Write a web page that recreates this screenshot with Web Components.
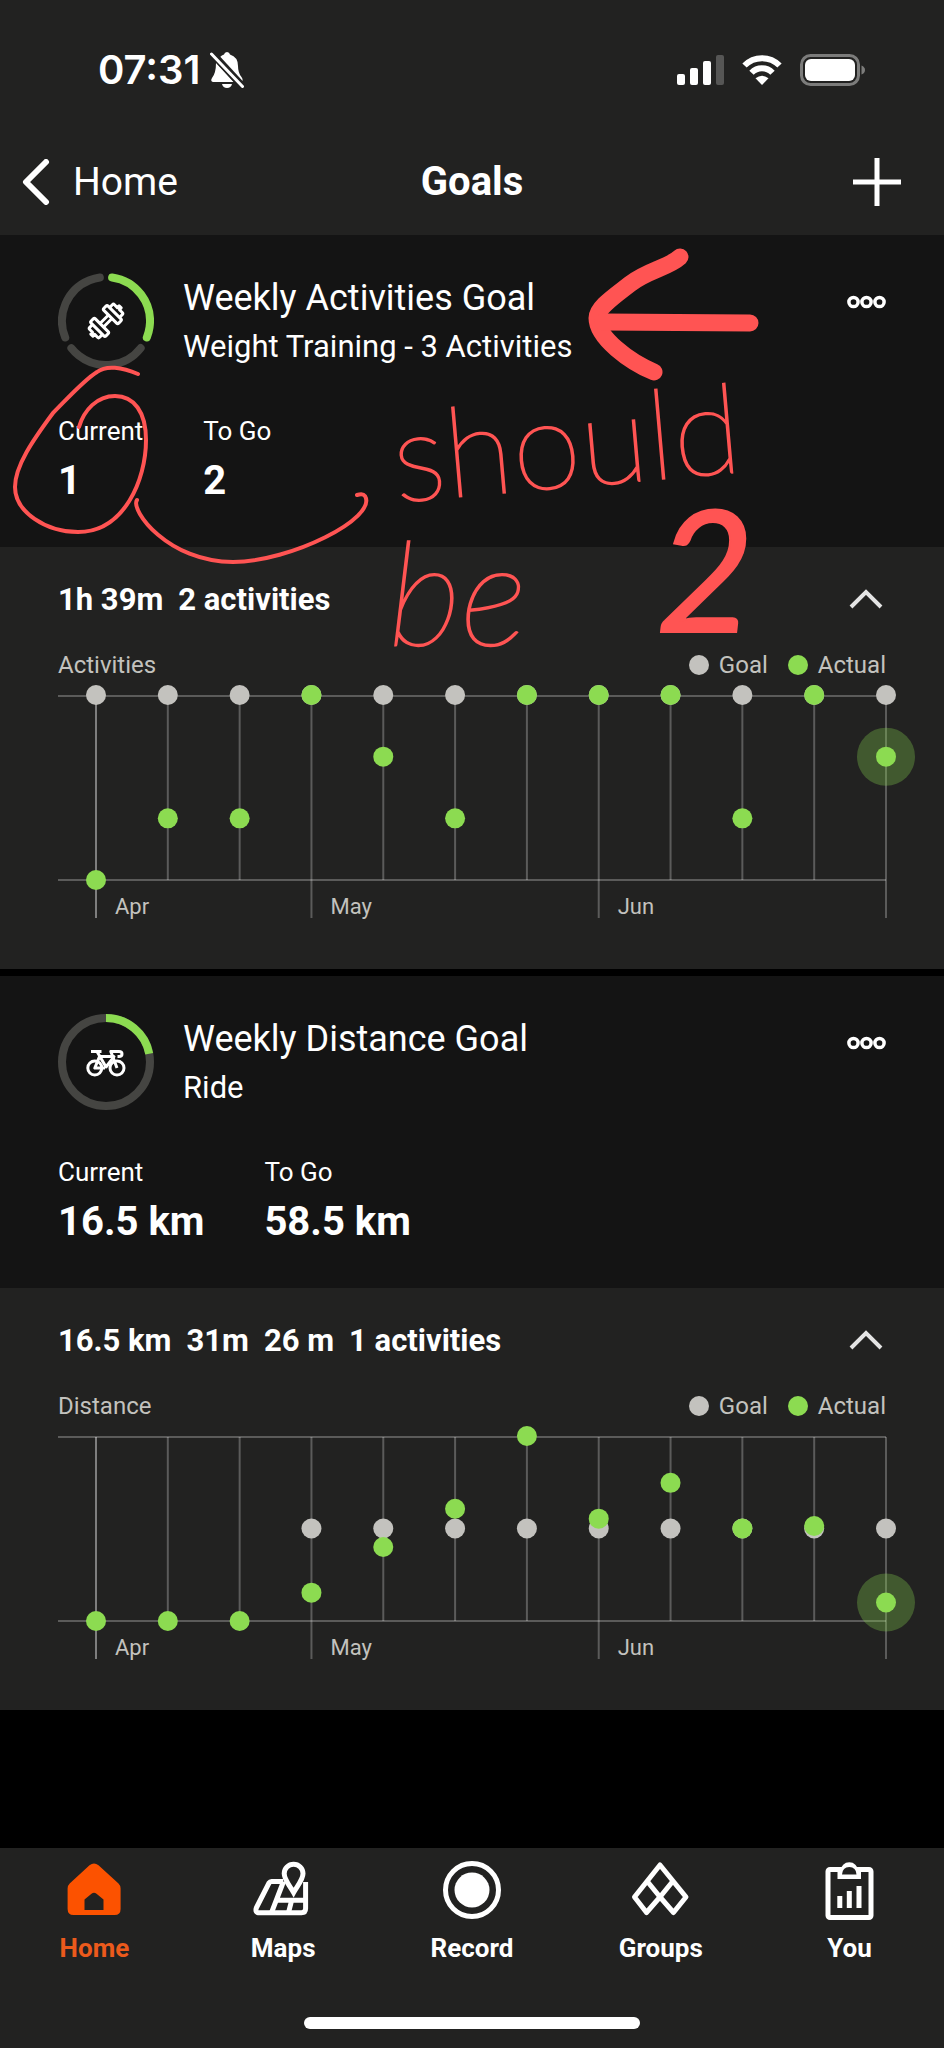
<!DOCTYPE html>
<html lang="en">
<head>
<meta charset="utf-8">
<meta name="viewport" content="width=device-width, initial-scale=1">
<title>Goals</title>
<style>
    html, body {
        margin: 0;
        background: #000;
    }

    body {
        --surface: #222221;
        --card: #141414;
        --green: #8cdb51;
        --grey: #c3c2be;
        --track: #454542;
        --ink: #ff5453;
        position: relative;
        display: flex;
        flex-direction: column;
        min-height: 100vh;
        color: #fff;
        font-family: Roboto, "Liberation Sans", sans-serif;
    }

    main {
        flex: 1;
        display: flex;
        flex-direction: column;
        gap: 7px;
    }
</style>
</head>
<body>
    <status-bar time="07:31"></status-bar>
    <nav-header back="Home">Goals</nav-header>

    <main>
        <goal-card heading="Weekly Activities Goal" subtitle="Weight Training - 3 Activities" current="1" togo="2">
            <goal-ring slot="ring" icon="dumbbell" steps="3" done="1"></goal-ring>
            <span slot="summary">1h 39m</span>
            <span slot="summary">2 activities</span>
            <goal-chart slot="chart" label="Activities" max="3"
                goal="3,3,3,3,3,3,3,3,3,3,3,3"
                actual="0,1,1,3,2,1,3,3,3,1,3,2"></goal-chart>
        </goal-card>

        <goal-card heading="Weekly Distance Goal" subtitle="Ride" current="16.5 km" togo="58.5 km">
            <goal-ring slot="ring" icon="bike" percent="22"></goal-ring>
            <span slot="summary">16.5 km</span>
            <span slot="summary">31m</span>
            <span slot="summary">26 m</span>
            <span slot="summary">1 activities</span>
            <goal-chart slot="chart" label="Distance" max="150"
                goal=",,,75,75,75,75,75,75,75,75,75"
                actual="0,0,0,23,60,91,150,83,112,75,77,15"></goal-chart>
        </goal-card>
    </main>

    <tab-bar>
        <tab-item icon="home" active>Home</tab-item>
        <tab-item icon="maps">Maps</tab-item>
        <tab-item icon="record">Record</tab-item>
        <tab-item icon="groups">Groups</tab-item>
        <tab-item icon="you">You</tab-item>
    </tab-bar>

    <ink-note></ink-note>

<script>
// Attach an open shadow root and fill it
function render(el, html) {
    const template = document.createElement('template');
    template.innerHTML = html;
    el.attachShadow({ mode: 'open' }).appendChild(template.content.cloneNode(true));
}

const ICONS = {
    dumbbell: `
        <svg width="40" height="40" viewBox="-20 -20 40 40" fill="none" stroke="#fff" stroke-width="3" stroke-linejoin="round">
            <g transform="rotate(-45)">
                <path d="M-6 -2.5H6M-6 2.5H6"/>
                <rect x="6" y="-10.5" width="6" height="21" rx="1.5"/>
                <rect x="-12" y="-10.5" width="6" height="21" rx="1.5"/>
                <path d="M12 -7H16Q17.5 -7 17.5 -5.5V-1.5H20V1.5H17.5V5.5Q17.5 7 16 7H12"/>
                <path d="M-12 -7H-16Q-17.5 -7 -17.5 -5.5V-1.5H-20V1.5H-17.5V5.5Q-17.5 7 -16 7H-12"/>
            </g>
        </svg>`,
    bike: `
        <svg width="40" height="40" viewBox="0 0 40 40" fill="none" stroke="#fff" stroke-width="3" stroke-linejoin="round">
            <circle cx="8.8" cy="26" r="7"/>
            <circle cx="31" cy="26" r="7"/>
            <path d="M5 9.4H15.5M11 9.4L20 25L28 14.6H13.5L8.8 26H19"/>
            <path d="M31 26L24.8 9.4H33Q36 9.4 36 12Q36 14.6 33 14.6H31.5"/>
        </svg>`,
    home: `
        <svg width="60" height="60" viewBox="0 0 60 60">
            <path fill="#fc5200" fill-rule="evenodd" d="M25.5 5.2Q30 1.8 34.5 5.2L54.5 23.5Q56.6 25.5 56.6 28.5V49Q56.6 55 50.6 55H9.6Q3.6 55 3.6 49V28.5Q3.6 25.5 5.7 23.5ZM20.5 50H39.5V39.5L32.5 33.7Q30 31.7 27.5 33.7L20.5 39.5Z"/>
        </svg>`,
    maps: `
        <svg width="60" height="60" viewBox="1 0 60 60" fill="none" stroke="#fff" stroke-width="5" stroke-linejoin="round">
            <path d="M31 21.5H19.5Q18 21.5 17 23L4.5 47.5Q2.5 52.7 7.5 52.7H49.5Q53.6 52.7 53.6 48.5V22"/>
            <path d="M31.5 21.5L19.5 52.7M25 40.2H53.6M39.5 41L36.5 52.7"/>
            <path stroke-linejoin="miter" fill="#222221" d="M41.6 32.5C38 26 32.2 20 32.2 13.6A9.4 9.4 0 0 1 51 13.6C51 20 45.2 26 41.6 32.5Z"/>
        </svg>`,
    record: `
        <svg width="60" height="60" viewBox="0 0 60 60">
            <circle cx="30" cy="30" r="26.5" fill="none" stroke="#fff" stroke-width="5"/>
            <circle cx="30" cy="30" r="17.5" fill="#fff"/>
        </svg>`,
    groups: `
        <svg width="60" height="60" viewBox="0 0 60 60" fill="none" stroke="#fff" stroke-width="5" stroke-linejoin="round">
            <path d="M29 5L55 37L42.5 52.5L29 37L15.5 52.5L3.5 37Z"/>
            <path d="M16 21L29 37L42 21"/>
        </svg>`,
    you: `
        <svg width="60" height="60" viewBox="0 0 60 60">
            <rect x="8" y="9.5" width="43" height="48" rx="2" fill="none" stroke="#fff" stroke-width="5"/>
            <path fill="#fff" d="M17.5 19V12H19.5Q22 2.3 29.3 2.3T39 12H41V19Z"/>
            <path fill="#222221" d="M22 14.5Q22.5 7 29.3 7T36.5 14.5Z"/>
            <path stroke="#fff" stroke-width="5" d="M19.8 48V36M29.3 48V31M39 48V26"/>
        </svg>`
};

class StatusBar extends HTMLElement {
    constructor() {
        super();
        render(this, `
            <style>
                :host {
                    display: flex;
                    align-items: center;
                    gap: 10px;
                    height: 140px;
                    padding: 0 79px 0 98px;
                    background: var(--surface);
                }

                time {
                    font: 600 40px/48px Inter, sans-serif;
                }

                .system {
                    display: flex;
                    align-items: center;
                    gap: 18px;
                    margin-left: auto;
                }

                svg {
                    display: block;
                }
            </style>
            <time>${this.getAttribute('time')}</time>
            <svg width="34" height="36" viewBox="0 0 34 36" fill="#fff">
                <path d="M9.5 5.5Q12 3 14 2.5Q14.5 0 17 0T20 2.5Q28 5 28 14Q28 21 31.5 25Q34 29 31 30H27Z"/>
                <path d="M6 11L23.5 30H3Q0 29 2 26Q6 21 6 11Z"/>
                <path d="M12 32H22Q21 36 17 36T12 32Z"/>
                <path d="M2.5 1.5L32.5 34" stroke="#222221" stroke-width="7"/>
                <path d="M1.5 2L32.5 34.5" stroke="#fff" stroke-width="3" stroke-linecap="round"/>
            </svg>
            <div class="system">
                <svg width="47" height="30" viewBox="0 0 47 30" fill="#fff">
                    <rect y="19" width="8" height="11" rx="2"/>
                    <rect x="13" y="13" width="8" height="17" rx="2"/>
                    <rect x="26" y="6" width="8" height="24" rx="2"/>
                    <rect x="39" width="8" height="30" rx="2" fill="#565655"/>
                </svg>
                <svg width="40" height="30" viewBox="0 0 40 30" fill="none" stroke="#fff" stroke-width="6">
                    <path d="M2.5 10.5A24.5 24.5 0 0 1 37.5 10.5"/>
                    <path d="M9.5 17.8A14.5 14.5 0 0 1 30.5 17.8"/>
                    <path fill="#fff" stroke="none" d="M20 30L13.5 23.3Q20 18 26.5 23.3Z"/>
                </svg>
                <svg width="65" height="32" viewBox="0 0 65 32">
                    <rect x="1.5" y="1.5" width="57" height="29" rx="9" fill="none" stroke="#7c7c7b" stroke-width="3"/>
                    <rect x="5" y="5" width="50" height="22" rx="6" fill="#fff"/>
                    <path d="M61.5 11.5Q65 13 65 16T61.5 20.5Z" fill="#7c7c7b"/>
                </svg>
            </div>
        `);
    }
}

class NavHeader extends HTMLElement {
    constructor() {
        super();
        render(this, `
            <style>
                :host {
                    display: grid;
                    grid-template-columns: 1fr auto 1fr;
                    align-items: center;
                    height: 84px;
                    padding: 0 22px 11px;
                    background: var(--surface);
                    font-size: 39px;
                    line-height: 48px;
                }

                a {
                    display: flex;
                    align-items: center;
                    gap: 23px;
                    color: #fff;
                    text-decoration: none;
                }

                h1 {
                    margin: 0;
                    font-size: 40px;
                    font-weight: 700;
                }

                button {
                    justify-self: end;
                    margin-right: 20px;
                    padding: 0;
                    border: 0;
                    background: none;
                }

                svg {
                    display: block;
                }
            </style>
            <a href="#home">
                <svg width="28" height="46" viewBox="0 0 28 46" fill="none" stroke="#fff" stroke-width="6" stroke-linecap="round" stroke-linejoin="round">
                    <path d="M24 3L4 23L24 43"/>
                </svg>
                ${this.getAttribute('back')}
            </a>
            <h1><slot></slot></h1>
            <button type="button" aria-label="Add goal">
                <svg width="50" height="50" viewBox="0 0 50 50" stroke="#fff" stroke-width="5">
                    <path d="M25 1V49M1 25H49"/>
                </svg>
            </button>
        `);
    }
}

class GoalRing extends HTMLElement {
    constructor() {
        super();
        const steps = Number(this.getAttribute('steps'));
        const done = Number(this.getAttribute('done'));
        let arcs = '';

        if (steps) {
            // Round-capped arcs with a gap on both sides of each step
            const sweep = 360 / steps;
            for (let i = 0; i < steps; i++) {
                arcs += `<circle r="44" pathLength="360" stroke-linecap="round"
                    stroke-dasharray="${sweep - 16} 360" transform="rotate(${i * sweep + 8 - 90})"
                    stroke="var(${i < done ? '--green' : '--track'})"/>`;
            }
        } else {
            const percent = Number(this.getAttribute('percent'));
            arcs = `<circle r="44" stroke="var(--track)"/>
                <circle r="44" pathLength="100" stroke-dasharray="${percent} 100" transform="rotate(-90)" stroke="var(--green)"/>`;
        }

        render(this, `
            <style>
                :host {
                    display: grid;
                    place-items: center;
                    width: 96px;
                    height: 96px;
                }

                svg {
                    display: block;
                    grid-area: 1 / 1;
                }
            </style>
            <svg width="96" height="96" viewBox="-48 -48 96 96" fill="none" stroke-width="8">${arcs}</svg>
            ${ICONS[this.getAttribute('icon')]}
        `);
    }
}

class GoalCard extends HTMLElement {
    constructor() {
        super();
        render(this, `
            <style>
                :host {
                    display: block;
                }

                header {
                    padding: 36px 58px;
                    background: var(--card);
                }

                .top {
                    display: flex;
                    align-items: center;
                    gap: 29px;
                }

                .titles {
                    flex: 1;
                    padding-top: 2px;
                }

                h2, p, dl, dd {
                    margin: 0;
                }

                h2 {
                    font-size: 36px;
                    font-weight: 400;
                    line-height: 50px;
                }

                p {
                    font-size: 31px;
                    line-height: 48px;
                }

                button {
                    display: grid;
                    place-items: center;
                    width: 40px;
                    height: 62px;
                    padding: 0;
                    border: 0;
                    background: none;
                }

                .menu {
                    align-self: flex-start;
                }

                dl {
                    display: flex;
                    gap: 60px;
                    margin-top: 40px;
                }

                dt {
                    font-size: 26px;
                    line-height: 40px;
                }

                dd {
                    font-size: 40px;
                    font-weight: 700;
                    line-height: 60px;
                }

                section {
                    padding: 26px 58px 48px;
                    background: var(--surface);
                }

                .bar {
                    display: flex;
                    align-items: center;
                    justify-content: space-between;
                    height: 52px;
                    margin-bottom: 24px;
                }

                .summary {
                    display: flex;
                    gap: 15px;
                    font-size: 31px;
                    font-weight: 700;
                }
            </style>
            <header>
                <div class="top">
                    <slot name="ring"></slot>
                    <div class="titles">
                        <h2>${this.getAttribute('heading')}</h2>
                        <p>${this.getAttribute('subtitle')}</p>
                    </div>
                    <button class="menu" type="button" aria-label="More">
                        <svg width="40" height="14" viewBox="0 0 40 14" fill="none" stroke="#fff" stroke-width="3.5">
                            <circle cx="7.5" cy="7" r="4.6"/>
                            <circle cx="20.5" cy="7" r="4.6"/>
                            <circle cx="33.5" cy="7" r="4.6"/>
                        </svg>
                    </button>
                </div>
                <dl>
                    <div><dt>Current</dt><dd>${this.getAttribute('current')}</dd></div>
                    <div><dt>To Go</dt><dd>${this.getAttribute('togo')}</dd></div>
                </dl>
            </header>
            <section>
                <div class="bar">
                    <div class="summary"><slot name="summary"></slot></div>
                    <button type="button" aria-label="Collapse">
                        <svg width="34" height="20" viewBox="0 0 34 20" fill="none" stroke="#e4e4e4" stroke-width="4">
                            <path d="M2 18L17 3L32 18"/>
                        </svg>
                    </button>
                </div>
                <slot name="chart"></slot>
            </section>
        `);
    }
}

class GoalChart extends HTMLElement {
    constructor() {
        super();
        const TOP = 15;
        const BOTTOM = 199;
        const max = Number(this.getAttribute('max'));
        const list = name => this.getAttribute(name).split(',').map(v => v === '' ? null : Number(v));
        const goal = list('goal');
        const actual = list('actual');
        const last = actual.length - 1;
        const months = { 0: 'Apr', 3: 'May', 7: 'Jun' };
        const x = i => `${i * 100 / last}%`;
        const y = v => BOTTOM - (BOTTOM - TOP + 1) * v / max;

        let lines = '';
        let dots = '';
        actual.forEach((value, i) => {
            const long = i in months || i === last;
            lines += `<line x1="${x(i)}" x2="${x(i)}" y1="${TOP}" y2="${long ? 237 : BOTTOM}" ${i === 0 ? 'class="first"' : ''}/>`;
            if (months[i]) lines += `<text x="${x(i)}" y="233" dx="19">${months[i]}</text>`;
            if (goal[i] !== null) dots += `<circle cx="${x(i)}" cy="${y(goal[i])}" r="10" class="goal"/>`;
            if (i === last) dots += `<circle cx="${x(i)}" cy="${y(value)}" r="29" class="halo"/>`;
            dots += `<circle cx="${x(i)}" cy="${y(value)}" r="10" class="actual"/>`;
        });

        render(this, `
            <style>
                :host {
                    display: block;
                    color: var(--grey);
                }

                .legend {
                    display: flex;
                    align-items: center;
                    gap: 20px;
                    font-size: 24px;
                    line-height: 32px;
                }

                .legend span:first-child {
                    margin-right: auto;
                }

                .key {
                    display: flex;
                    align-items: center;
                    gap: 10px;
                }

                .key::before {
                    content: "";
                    width: 20px;
                    height: 20px;
                    border-radius: 50%;
                    background: var(--grey);
                }

                .key.green::before {
                    background: var(--green);
                }

                svg {
                    display: block;
                    overflow: visible;
                }

                .plot {
                    width: calc(100% - 38px);
                }

                line {
                    stroke: #fff;
                    stroke-opacity: .26;
                    stroke-width: 2;
                }

                .first {
                    stroke-opacity: .42;
                }

                text {
                    fill: var(--grey);
                    font-size: 22px;
                }

                .goal {
                    fill: var(--grey);
                }

                .actual {
                    fill: var(--green);
                }

                .halo {
                    fill: var(--green);
                    fill-opacity: .3;
                }
            </style>
            <div class="legend">
                <span>${this.getAttribute('label')}</span>
                <span class="key">Goal</span>
                <span class="key green">Actual</span>
            </div>
            <svg width="100%" height="240">
                <line x1="0" x2="100%" y1="${TOP}" y2="${TOP}"/>
                <line x1="0" x2="100%" y1="${BOTTOM}" y2="${BOTTOM}"/>
                <svg class="plot" x="38" height="240">${lines}${dots}</svg>
            </svg>
        `);
    }
}

class TabBar extends HTMLElement {
    constructor() {
        super();
        render(this, `
            <style>
                :host {
                    display: block;
                    padding: 12px 0 19px;
                    background: var(--surface);
                }

                nav {
                    display: grid;
                    grid-template-columns: repeat(5, 1fr);
                }

                .indicator {
                    width: 336px;
                    height: 12px;
                    margin: 53px auto 0;
                    border-radius: 6px;
                    background: #fff;
                }
            </style>
            <nav><slot></slot></nav>
            <div class="indicator"></div>
        `);
    }
}

class TabItem extends HTMLElement {
    constructor() {
        super();
        render(this, `
            <style>
                :host {
                    display: block;
                    color: #fff;
                }

                :host([active]) {
                    color: #ec5a1c;
                }

                a {
                    display: flex;
                    flex-direction: column;
                    align-items: center;
                    gap: 12px;
                    color: inherit;
                    font-size: 26px;
                    font-weight: 700;
                    line-height: 32px;
                    text-decoration: none;
                }
            </style>
            <a href="#${this.getAttribute('icon')}">
                ${ICONS[this.getAttribute('icon')]}
                <slot></slot>
            </a>
        `);
    }
}

// Red pen marks lying over the first card
class InkNote extends HTMLElement {
    constructor() {
        super();
        render(this, `
            <style>
                :host {
                    position: absolute;
                    top: 235px;
                    left: 0;
                    color: var(--ink);
                    font-family: Lato, sans-serif;
                    font-weight: 100;
                    pointer-events: none;
                }

                svg {
                    display: block;
                }

                span {
                    position: absolute;
                    white-space: nowrap;
                    -webkit-text-stroke: 2px var(--ink);
                }

                .should {
                    left: 392px;
                    top: 154px;
                    font-size: 124px;
                    line-height: 100px;
                    rotate: -5deg;
                }

                .be {
                    display: flex;
                    gap: 24px;
                    left: 388px;
                    top: 300px;
                    font-size: 144px;
                    font-style: italic;
                    line-height: 110px;
                }

                .two {
                    left: 656px;
                    top: 266px;
                    font-size: 170px;
                    font-style: italic;
                    font-weight: 400;
                    line-height: 130px;
                }
            </style>
            <svg width="780" height="340" viewBox="0 235 780 340" fill="none" stroke="currentColor" stroke-linecap="round" stroke-linejoin="round">
                <path stroke-width="4" d="M138 374C122 367 106 365 97 372C84 380 68 398 53 413C33 440 15 466 15 487C15 512 46 532 78 532C124 532 146 480 146 440C146 412 134 396 115 396C97 396 84 410 79 427"/>
                <path stroke-width="4" d="M137 500C130 510 168 562 233 562C290 562 378 518 365 496Q363 493 357 495"/>
                <path stroke-width="17" d="M680 257C668 268 648 270 630 284C612 298 597 308 597 318C597 338 630 362 654 372"/>
                <path stroke-width="17" d="M603 322L750 323"/>
            </svg>
            <span class="should">should</span>
            <span class="be">be</span>
            <span class="two">2</span>
        `);
    }
}

customElements.define('status-bar', StatusBar);
customElements.define('nav-header', NavHeader);
customElements.define('goal-ring', GoalRing);
customElements.define('goal-card', GoalCard);
customElements.define('goal-chart', GoalChart);
customElements.define('tab-bar', TabBar);
customElements.define('tab-item', TabItem);
customElements.define('ink-note', InkNote);
</script>
</body>
</html>
